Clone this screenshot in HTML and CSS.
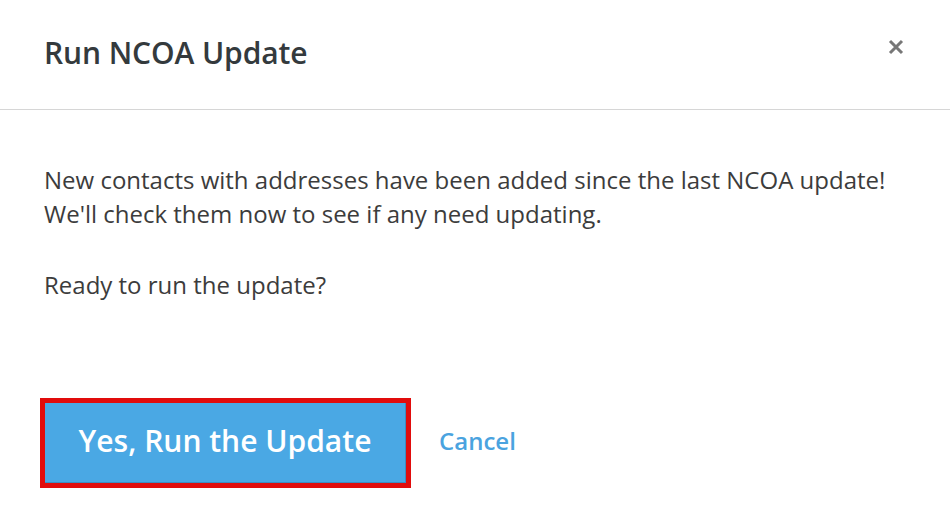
FILE: index.html
```html
<!DOCTYPE html>
<html>
<head>
<meta charset="utf-8">
<link rel="stylesheet" href="styles.css">
</head>
<body>
<div class="modal">
  <div class="modal-header">
    <h2 class="modal-title">Run NCOA Update</h2>
    <button class="close" aria-label="Close">
      <svg width="16" height="16" viewBox="0 0 16 16"><path d="M2 2 L14 14 M14 2 L2 14" stroke="#777" stroke-width="3" stroke-linecap="butt"/></svg>
    </button>
  </div>
  <div class="modal-body">
    <p>New contacts with addresses have been added since the last NCOA update!<br>We'll check them now to see if any need updating.</p>
    <p>Ready to run the update?</p>
  </div>
  <div class="modal-footer">
    <div class="highlight"><button class="btn-primary">Yes, Run the Update</button></div>
    <a class="cancel" href="#">Cancel</a>
  </div>
</div>
</body>
</html>
```
FILE: styles.css
```css
html, body { margin: 0; padding: 0; background: #fff; }
body { font-family: "Open Sans", sans-serif; width: 950px; height: 522px; overflow: hidden; }
.modal { display: flex; flex-direction: column; }
.modal-header {
  height: 109px;
  border-bottom: 1px solid #d6d6d6;
  display: flex;
  align-items: center;
  justify-content: space-between;
  padding: 0 46px 0 44px;
  box-sizing: content-box;
}
.modal-title { margin: 0 0 4px 0; font-size: 30px; font-weight: 600; color: #343a3d; letter-spacing: -0.1px; }
.close { border: 0; background: none; padding: 0; margin: 0 0 16px 0; width: 16px; height: 16px; display: flex; }
.modal-body { padding: 53px 44px 0 44px; }
.modal-body p { margin: 0 0 37px 0; font-size: 24px; line-height: 34px; color: #3c3c3c; }
.modal-body p:last-child { margin-bottom: 0; }
.modal-footer { display: flex; align-items: center; padding: 96px 0 0 40px; gap: 28px; }
.highlight { border: 5px solid #e10c0c; display: flex; }
.btn-primary {
  width: 361px; height: 80px;
  background: #4aa8e4; border: 0; border-right: 1px solid #3d8cc0; border-bottom: 1px solid #3d8cc0;
  color: #fff; font-family: "Open Sans", sans-serif; font-size: 30px; font-weight: 600;
  padding: 0 0 4px 0; margin: 0;
}
.cancel { color: #4aa3df; font-size: 24px; font-weight: 600; text-decoration: none; margin-bottom: 6px; }
```
